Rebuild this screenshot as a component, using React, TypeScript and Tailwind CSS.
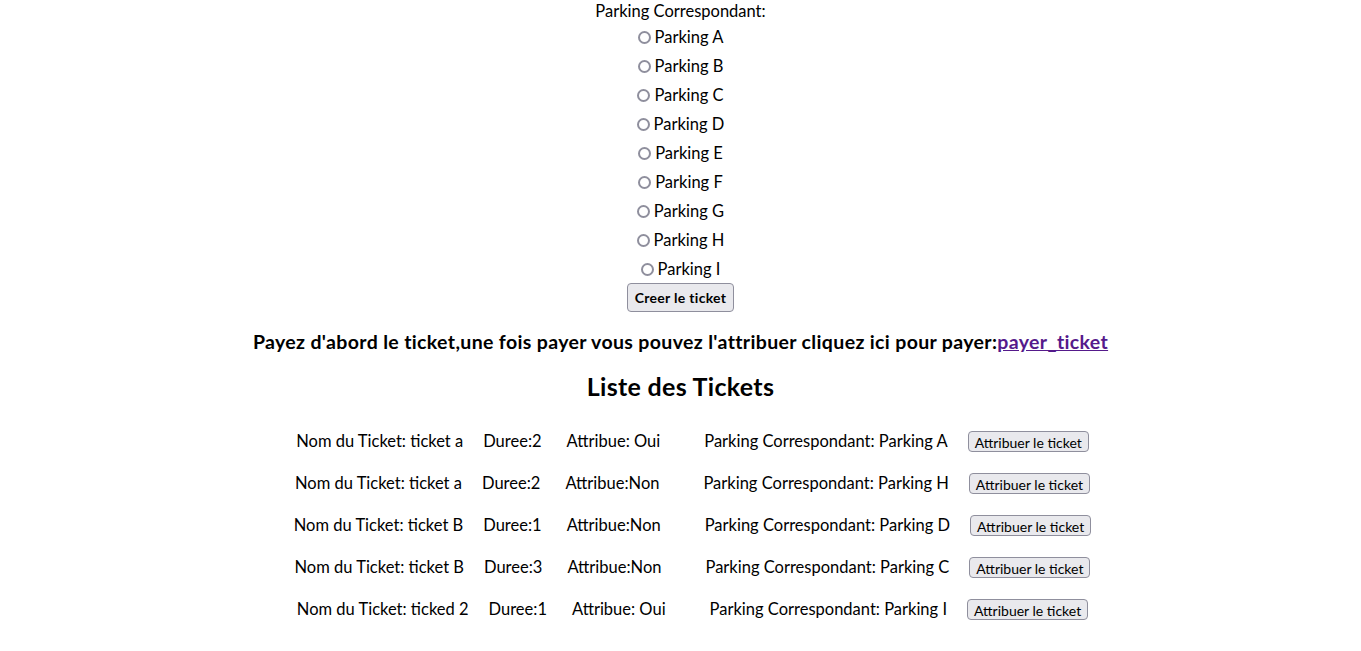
const parkings = ['A', 'B', 'C', 'D', 'E', 'F', 'G', 'H', 'I'];

const tickets = [
  { nom: 'ticket a', duree: 'Duree:2', attribue: 'Attribue: Oui', parking: 'Parking A' },
  { nom: 'ticket a', duree: 'Duree:2', attribue: 'Attribue:Non', parking: 'Parking H' },
  { nom: 'ticket B', duree: 'Duree:1', attribue: 'Attribue:Non', parking: 'Parking D' },
  { nom: 'ticket B', duree: 'Duree:3', attribue: 'Attribue:Non', parking: 'Parking C' },
  { nom: 'ticked 2', duree: 'Duree:1', attribue: 'Attribue: Oui', parking: 'Parking I' },
];

function Radio() {
  return (
    <span className="block shrink-0 w-[13px] h-[13px] rounded-full border-2 border-[#8f8f9d] bg-white mr-[4px] mt-[1px] box-border"></span>
  );
}

export default function App() {
  return (
    <div className="min-h-[651px] bg-white text-black font-['Lato','Liberation_Sans',sans-serif] text-[16.5px]">
      <form className="flex flex-col items-center">
        <label className="leading-[22px] h-[22px]">Parking Correspondant:</label>
        {parkings.map((p) => (
          <div key={p} className="h-[29px] flex items-center">
            <Radio />
            <span className="leading-[20px]">Parking {p}</span>
          </div>
        ))}
        <button
          type="button"
          className="h-[29px] px-[7px] font-bold text-[14px] tracking-[0.3px] bg-[#e9e9ed] border border-[#8f8f9d] rounded-[4px]"
        >
          Creer le ticket
        </button>
      </form>

      <h3 className="mt-[18px] text-center font-bold text-[19.5px] tracking-[0.35px] leading-[23px]">
        Payez d'abord le ticket,une fois payer vous pouvez l'attribuer cliquez ici pour payer:
        <a href="#" className="text-[#551a8b] underline">payer_ticket</a>
      </h3>

      <h2 className="mt-[19px] text-center font-bold text-[25px] tracking-[0.3px] leading-[28px]">Liste des Tickets</h2>

      <div className="mt-[20px] flex flex-col">
        {tickets.map((t, i) => (
          <div key={i} className="h-[42px] flex items-center justify-center pl-[24px]">
            <span>Nom du Ticket: {t.nom}</span>
            <span className="ml-[20px]">{t.duree}</span>
            <span className="ml-[25px]">{t.attribue}</span>
            <span className="ml-[44px]">Parking Correspondant: {t.parking}</span>
            <button
              type="button"
              className="ml-[20px] h-[21px] px-[6px] text-[14px] bg-[#e9e9ed] border border-[#8f8f9d] rounded-[4px]"
            >
              Attribuer le ticket
            </button>
          </div>
        ))}
      </div>
    </div>
  );
}
